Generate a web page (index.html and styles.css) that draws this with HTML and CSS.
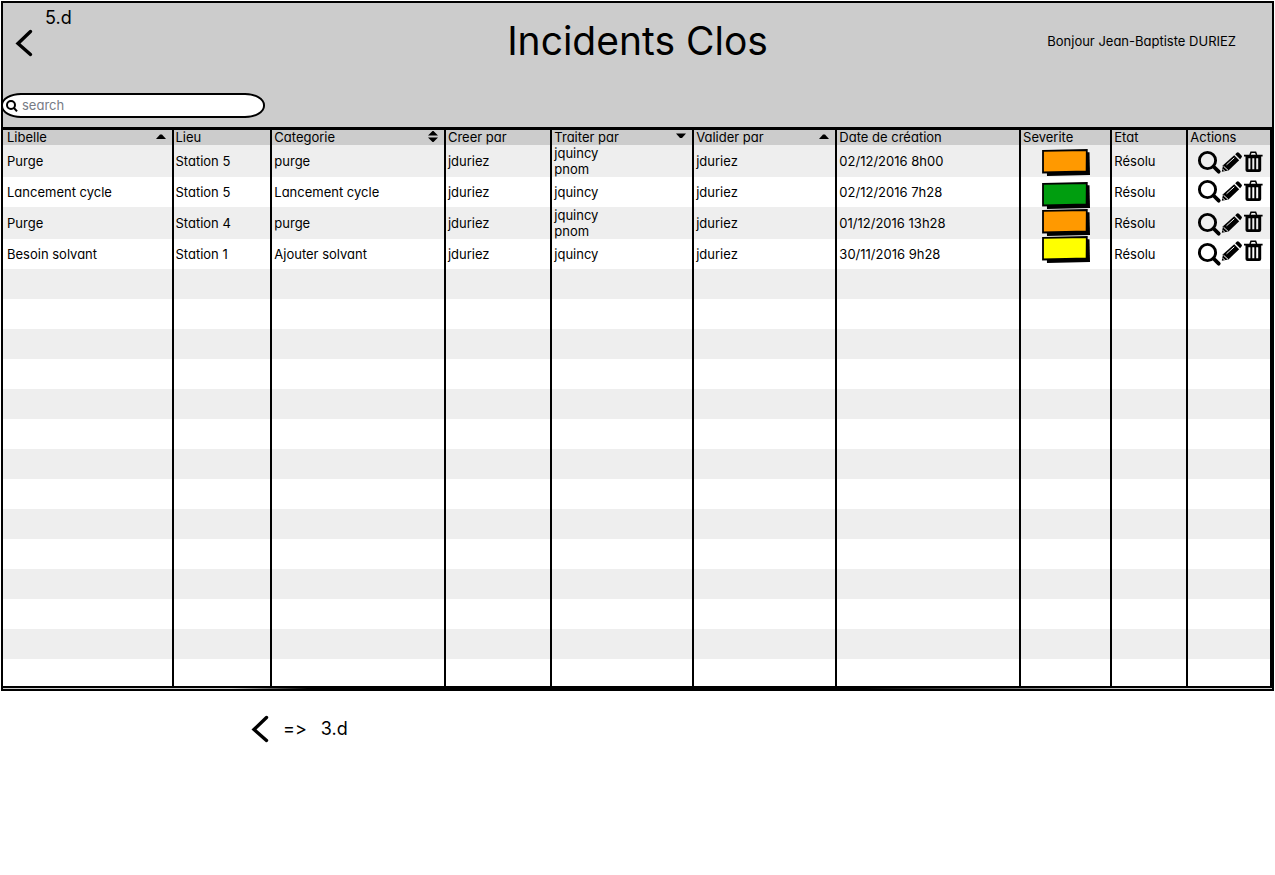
FILE: index.html
```html
<!DOCTYPE html>
<html lang="fr">
<head>
<meta charset="utf-8">
<title>Incidents Clos</title>
<link rel="stylesheet" href="styles.css">
</head>
<body>
<svg class="defs" aria-hidden="true">
  <symbol id="chevron" viewBox="0 0 18 28"><path d="M15.500 2.500L3 14.500l12.500 11" fill="none" stroke="#000" stroke-width="3.400" stroke-linecap="round"/></symbol>
  <g id="loupe"><circle cx="9.500" cy="9.500" r="8.100" fill="none" stroke="#000" stroke-width="2.900"/><path d="M15.500 15.500l5.200 5.200" stroke="#000" stroke-width="3.800" stroke-linecap="round"/></g>
  <g id="pencil"><path d="M.8 19.800l1.200-6.500L13.200 3.200l5 5L7.500 18.400z"/><path d="M14.200 2.300l1.500-1.500q1-1 2.200 0l2.600 2.600q1 1.100 0 2.200l-1.400 1.600z"/><path class="cut" d="M5.500 12.800l7.800-7M2.500 14.200l4.600 4.200"/><path class="cut" d="M1.800 17.200l1.800 1.800" stroke-width=".6"/></g>
  <g id="bin"><path d="M6 4l1-2.800h4.600L12.600 4" fill="none" stroke="#000" stroke-width="1.500"/><path d="M0 3.800h18.600v1.700H0zM1.500 5.500h15.700V19q0 2-2 2H3.500q-2 0-2-2z"/><path class="slot" d="M5.400 7.200v11M9.300 7.200v11M13.200 7.200v11"/></g>
  <g id="tile"><path d="M4 3l43.500 .2L48 26l-43 1z" fill="#000"/><path d="M1 1.800L44.800 1l-.2 21.400L24 23l-23 .5z" stroke="#000" stroke-width="1.800"/></g>
</svg>
<main class="board">
  <header class="top">
    <nav class="back">
      <span class="ref">5.d</span>
      <a href="#" aria-label="Retour"><svg class="chevron"><use href="#chevron"/></svg></a>
    </nav>
    <h1>Incidents Clos</h1>
    <p class="hello">Bonjour Jean-Baptiste DURIEZ</p>
    <label class="search">
      <svg viewBox="0 0 12 12" aria-hidden="true"><circle cx="5" cy="5" r="4"/><path d="M8 8l3 3.300"/></svg>
      <input type="search" placeholder="search" aria-label="search">
    </label>
  </header>
  <table>
    <colgroup><col class="c1"><col class="c2"><col class="c3"><col class="c4"><col class="c5"><col class="c6"><col class="c7"><col class="c8"><col class="c9"><col class="c10"></colgroup>
    <thead><tr>
      <th><div>Libelle<svg class="sort" viewBox="0 0 10 14"><path d="M0 9l4-4.500h2L10 9z"/></svg></div></th>
      <th>Lieu</th>
      <th><div>Categorie<svg class="sort" viewBox="0 0 10 14"><path d="M0 5.500L4.500 1h1L10 5.500zM0 7.500h10L5.500 12h-1z"/></svg></div></th>
      <th>Creer par</th>
      <th><div>Traiter par<svg class="sort" viewBox="0 0 10 14"><path d="M0 3.500h10L6 8H4z"/></svg></div></th>
      <th><div>Valider par<svg class="sort" viewBox="0 0 10 14"><path d="M0 9l4-4.500h2L10 9z"/></svg></div></th>
      <th>Date de création</th><th>Severite</th><th>Etat</th><th>Actions</th>
    </tr></thead>
    <tbody>
      <tr class="tall"><td>Purge</td><td>Station 5</td><td>purge</td><td>jduriez</td><td>jquincy<br>pnom</td><td>jduriez</td><td>02/12/2016 8h00</td>
        <td class="pic"><svg class="tag orange"><use href="#tile" y="4"/></svg></td><td>Résolu</td>
        <td class="pic"><div class="acts"><button aria-label="Voir"><svg><use href="#loupe" y="6"/></svg></button><button aria-label="Modifier"><svg><use href="#pencil" y="7"/></svg></button><button aria-label="Supprimer"><svg><use href="#bin" y="6"/></svg></button></div></td></tr>
      <tr><td>Lancement cycle</td><td>Station 5</td><td>Lancement cycle</td><td>jduriez</td><td>jquincy</td><td>jduriez</td><td>02/12/2016 7h28</td>
        <td class="pic"><svg class="tag green"><use href="#tile" y="5"/></svg></td><td>Résolu</td>
        <td class="pic"><div class="acts"><button aria-label="Voir"><svg><use href="#loupe" y="3"/></svg></button><button aria-label="Modifier"><svg><use href="#pencil" y="4"/></svg></button><button aria-label="Supprimer"><svg><use href="#bin" y="3"/></svg></button></div></td></tr>
      <tr class="tall"><td>Purge</td><td>Station 4</td><td>purge</td><td>jduriez</td><td>jquincy<br>pnom</td><td>jduriez</td><td>01/12/2016 13h28</td>
        <td class="pic"><svg class="tag orange"><use href="#tile" y="2"/></svg></td><td>Résolu</td>
        <td class="pic"><div class="acts"><button aria-label="Voir"><svg><use href="#loupe" y="6"/></svg></button><button aria-label="Modifier"><svg><use href="#pencil" y="6"/></svg></button><button aria-label="Supprimer"><svg><use href="#bin" y="4"/></svg></button></div></td></tr>
      <tr><td>Besoin solvant</td><td>Station 1</td><td>Ajouter solvant</td><td>jduriez</td><td>jquincy</td><td>jduriez</td><td>30/11/2016 9h28</td>
        <td class="pic"><svg class="tag yellow"><use href="#tile" y="-3"/></svg></td><td>Résolu</td>
        <td class="pic"><div class="acts"><button aria-label="Voir"><svg><use href="#loupe" y="4"/></svg></button><button aria-label="Modifier"><svg><use href="#pencil" y="2"/></svg></button><button aria-label="Supprimer"><svg><use href="#bin" y="1"/></svg></button></div></td></tr>
      <tr><td></td><td></td><td></td><td></td><td></td><td></td><td></td><td></td><td></td><td></td></tr>
      <tr><td></td><td></td><td></td><td></td><td></td><td></td><td></td><td></td><td></td><td></td></tr>
      <tr><td></td><td></td><td></td><td></td><td></td><td></td><td></td><td></td><td></td><td></td></tr>
      <tr><td></td><td></td><td></td><td></td><td></td><td></td><td></td><td></td><td></td><td></td></tr>
      <tr><td></td><td></td><td></td><td></td><td></td><td></td><td></td><td></td><td></td><td></td></tr>
      <tr><td></td><td></td><td></td><td></td><td></td><td></td><td></td><td></td><td></td><td></td></tr>
      <tr><td></td><td></td><td></td><td></td><td></td><td></td><td></td><td></td><td></td><td></td></tr>
      <tr><td></td><td></td><td></td><td></td><td></td><td></td><td></td><td></td><td></td><td></td></tr>
      <tr><td></td><td></td><td></td><td></td><td></td><td></td><td></td><td></td><td></td><td></td></tr>
      <tr><td></td><td></td><td></td><td></td><td></td><td></td><td></td><td></td><td></td><td></td></tr>
      <tr><td></td><td></td><td></td><td></td><td></td><td></td><td></td><td></td><td></td><td></td></tr>
      <tr><td></td><td></td><td></td><td></td><td></td><td></td><td></td><td></td><td></td><td></td></tr>
      <tr><td></td><td></td><td></td><td></td><td></td><td></td><td></td><td></td><td></td><td></td></tr>
      <tr class="last"><td></td><td></td><td></td><td></td><td></td><td></td><td></td><td></td><td></td><td></td></tr>
    </tbody>
  </table>
</main>
<footer class="legend">
  <svg class="chevron" aria-hidden="true"><use href="#chevron"/></svg>
  <span>=&gt;</span>
  <span>3.d</span>
</footer>
</body>
</html>
```
FILE: styles.css
```css
* { box-sizing: border-box; }
body {
  margin: 0;
  background: #fff;
  color: #000;
  font: 13px/16px Inter, "Liberation Sans", sans-serif;
  font-feature-settings: "calt" 0, "cv11" 1;
}
.defs { position: absolute; width: 0; height: 0; }
.board {
  margin: 1px 1px 0;
  padding-bottom: 1px;
  border: 2px solid #000;
  background: linear-gradient(90deg, #ccc 18%, #000 24%, #000 68%, #ccc 88%);
}
.top {
  display: grid;
  grid-template-columns: 1fr auto 1fr;
  grid-template-rows: 90px 34px;
  background: #ccc;
}
.back { display: flex; flex-direction: column; align-items: flex-start; padding: 4px 12px; }
.ref { font-size: 18px; line-height: 22px; padding-left: 30px; }
.back a { display: block; height: 28px; }
.chevron { display: block; width: 18px; height: 28px; }
h1 { margin: 0; padding-top: 14px; font-size: 39px; line-height: 48px; font-weight: 400; }
.hello { margin: 0; padding: 30px 36px 0 0; text-align: right; }
.search {
  display: flex;
  align-items: center;
  gap: 4px;
  justify-self: start;
  width: 264px;
  height: 25px;
  margin-left: -2px;
  padding: 0 3px;
  border: 2px solid #000;
  border-radius: 20px / 12px;
  background: #fff;
}
.search svg { width: 12px; height: 12px; fill: none; stroke: #000; stroke-width: 2; }
.search input { flex: 1; min-width: 0; border: 0; padding: 0 0 2px; outline: 0; background: none; font: inherit; font-feature-settings: inherit; color: #000; }
.search input::placeholder { color: #777b85; opacity: 1; }
table {
  width: 100%;
  table-layout: fixed;
  border-collapse: separate;
  border-spacing: 0;
  border: solid #000;
  border-width: 3px 2px 2px 0;
  background: #fff;
}
.c1 { width: 13.3%; } .c2 { width: 7.8%; } .c3 { width: 13.7%; } .c4 { width: 8.4%; } .c5 { width: 11.2%; }
.c6 { width: 11.3%; } .c7 { width: 14.5%; } .c8 { width: 7.2%; } .c9 { width: 6%; } .c10 { width: 6.6%; }
th, td { padding: 0 0 0 2px; border-left: 2px solid #000; text-align: left; font-weight: 400; vertical-align: middle; white-space: nowrap; }
th:first-child, td:first-child { border-left: 0; padding-left: 4px; }
th { height: 15px; line-height: 15px; background: #ccc; }
th div { display: flex; justify-content: space-between; padding-right: 6px; }
.sort { width: 10px; height: 14px; }
td { height: 30px; }
.tall td { height: 32px; }
.last td { height: 27px; }
tbody tr { --paper: #fff; background: var(--paper); }
tbody tr:nth-child(odd) { --paper: #eee; }
td.pic { padding: 0; vertical-align: top; }
.tag { display: block; width: 48px; height: 30px; margin: 0 auto; overflow: visible; }
.orange { fill: #f90; } .green { fill: #009e0f; } .yellow { fill: #ff0; }
.cut { fill: none; stroke: var(--paper); stroke-width: 1; }
.slot { fill: none; stroke: var(--paper); stroke-width: 2; }
.acts { display: flex; gap: 1px; padding-left: 10px; }
.acts button { flex: none; width: 22px; height: 30px; padding: 0; border: 0; background: none; }
.acts svg { display: block; width: 22px; height: 30px; overflow: visible; }
.legend { display: flex; align-items: center; gap: 14px; padding: 24px 0 0 251px; font-size: 18px; line-height: 22px; }
```
